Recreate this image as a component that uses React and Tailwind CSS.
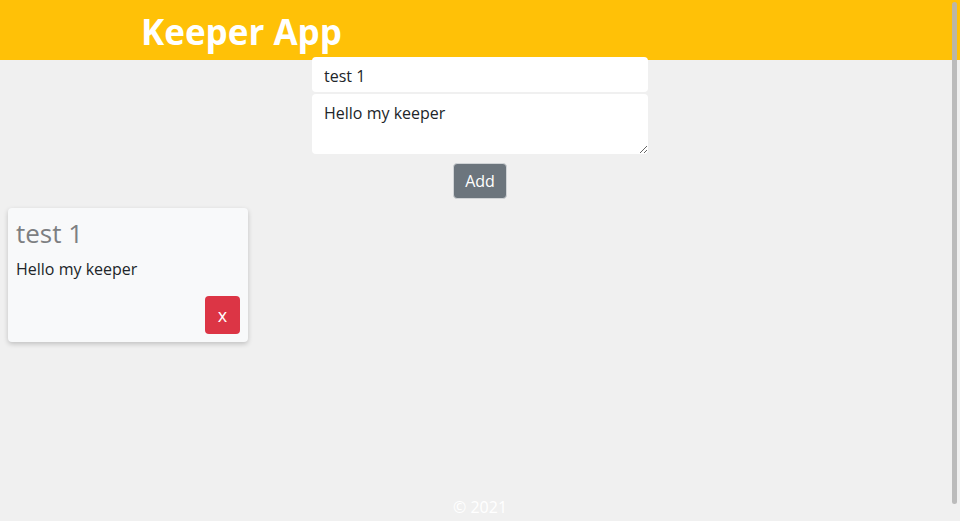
import React, { useState } from 'react';

const App = () => {
  const [title, setTitle] = useState('test 1');
  const [content, setContent] = useState('Hello my keeper');
  const [notes, setNotes] = useState([{ title: 'test 1', content: 'Hello my keeper' }]);

  const addNote = () => {
    setNotes([...notes, { title, content }]);
  };

  const deleteNote = (idx) => {
    setNotes(notes.filter((_, i) => i !== idx));
  };

  return (
    <div className="min-h-[521px] bg-[#f0f0f0] text-[#212529] font-['Open_Sans',sans-serif] flex flex-col">
      <header className="h-[60px] bg-[#ffc107] pl-[141px] flex items-center">
        <h1 className="text-[35px] font-bold text-white leading-none mt-[2px]">Keeper App</h1>
      </header>

      <div className="flex flex-col items-center">
        <form className="w-[336px] flex flex-col gap-[2px] mt-[-3px]" onSubmit={(e) => e.preventDefault()}>
          <input
            type="text"
            className="h-[35px] w-full bg-white rounded px-3 pt-[2px] text-base focus:outline-none"
            value={title}
            onChange={(e) => setTitle(e.target.value)}
          />
          <textarea
            className="h-[60px] w-full bg-white rounded px-3 pt-[7px] text-base focus:outline-none"
            value={content}
            onChange={(e) => setContent(e.target.value)}
          />
        </form>
        <button
          onClick={addNote}
          className="mt-[9px] w-[54px] h-[36px] bg-[#6c757d] border border-[#d0d3d6] rounded text-white text-base"
        >
          Add
        </button>
      </div>

      <div className="flex flex-wrap gap-4 px-2 mt-[9px]">
        {notes.map((note, idx) => (
          <div key={idx} className="w-[240px] h-[134px] bg-[#f8f9fa] rounded shadow-[0_2px_5px_rgba(0,0,0,0.2)] p-2 flex flex-col">
            <h2 className="text-[26px] text-[#7d7f82] leading-tight mt-[1px]">{note.title}</h2>
            <p className="text-base mt-[7px]">{note.content}</p>
            <div className="mt-auto flex justify-end">
              <button
                onClick={() => deleteNote(idx)}
                className="w-[35px] h-[38px] bg-[#dc3545] rounded text-white text-lg"
              >
                x
              </button>
            </div>
          </div>
        ))}
      </div>

      <footer className="mt-auto pb-[2px] text-center text-white text-base">© 2021</footer>

      <div className="fixed right-[3px] top-[2px] w-[5px] h-[502px] rounded bg-[#b5b5b5] opacity-90" />
    </div>
  );
};

export default App;
